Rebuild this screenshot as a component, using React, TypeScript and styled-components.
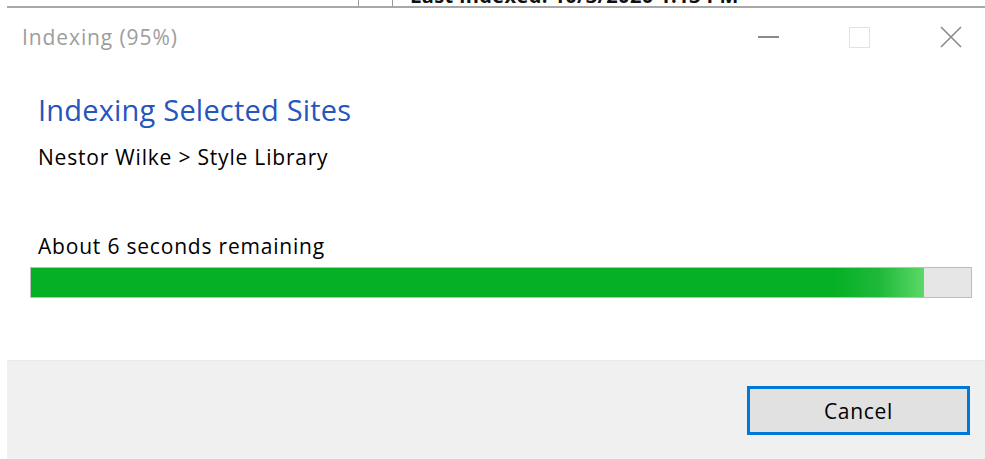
import styled, { createGlobalStyle } from "styled-components";

const GlobalStyle = createGlobalStyle`
  html, body {
    margin: 0;
    padding: 0;
    background: #ffffff;
    font-family: "Segoe UI", "Open Sans", "Noto Sans", sans-serif;
    overflow: hidden;
  }
`;

// sliver of the window lying behind the dialog
const Backdrop = styled.div`
  height: 6px;
  overflow: hidden;
  display: flex;
  align-items: flex-end;
  padding-left: 358px;
  color: #111;
`;

const Tick = styled.span<{ gap?: number }>`
  width: 1px;
  height: 6px;
  margin-left: ${(p) => p.gap ?? 0}px;
  background: #9a9a9a;
`;

const BehindText = styled.span`
  margin-left: 17px;
  font-size: 20px;
  line-height: 1;
  font-weight: 700;
  letter-spacing: 0.4px;
  white-space: nowrap;
`;

const Dialog = styled.div`
  margin-left: 7px;
  height: 453px;
  box-sizing: border-box;
  border-top: 2px solid #a8a8a8;
  background: #ffffff;
  display: flex;
  flex-direction: column;
`;

const TitleBar = styled.div`
  height: 61px;
  box-sizing: border-box;
  display: flex;
  align-items: center;
  padding: 0 0 3px 15px;
`;

const Title = styled.div`
  flex: 1;
  color: #9d9d9d;
  font-size: 21px;
  letter-spacing: 0.9px;
`;

const Controls = styled.div`
  display: flex;
  align-items: center;
  height: 100%;
  margin-right: -11px;
`;

const ControlButton = styled.div`
  width: 91px;
  height: 100%;
  display: flex;
  align-items: center;
  justify-content: center;
`;

const Content = styled.div`
  padding: 23px 13px 0 23px;
  flex: 1;
`;

const Heading = styled.div`
  margin-left: 8px;
  color: #2655bd;
  font-size: 29px;
  line-height: 36px;
  letter-spacing: 0.2px;
`;

const Line = styled.div<{ top: number }>`
  margin: ${(p) => p.top}px 0 0 8px;
  color: #000;
  font-size: 21px;
  line-height: 26px;
  letter-spacing: 0.8px;
`;

const Track = styled.div`
  margin-top: 8px;
  height: 29px;
  border: 1px solid #bcbcbc;
  background: #e6e6e6;
  display: flex;
`;

const Fill = styled.div`
  height: 100%;
  background: linear-gradient(
    to right,
    #06b025 0%,
    #06b025 90%,
    #1fb93a 95%,
    #5cd868 100%
  );
`;

const Footer = styled.div`
  height: 99px;
  background: #f0f0f0;
  border-top: 1px solid #e9e9e9;
  box-sizing: border-box;
  display: flex;
  justify-content: flex-end;
  padding: 25px 15px 0 0;
`;

const Button = styled.button`
  width: 223px;
  height: 49px;
  box-sizing: border-box;
  border: 3px solid #0078d7;
  background: #e1e1e1;
  font-family: inherit;
  font-size: 21px;
  letter-spacing: 0.7px;
  color: #000;
  padding: 0;
`;

const progress = 95;

export default function App() {
  return (
    <>
      <GlobalStyle />
      <Backdrop>
        <Tick />
        <Tick gap={33} />
        <BehindText>Last indexed: 10/3/2020 1:13 PM</BehindText>
      </Backdrop>
      <Dialog>
        <TitleBar>
          <Title>Indexing ({progress}%)</Title>
          <Controls>
            <ControlButton>
              <svg width="21" height="2" viewBox="0 0 21 2">
                <rect width="21" height="2" fill="#8a8a8a" />
              </svg>
            </ControlButton>
            <ControlButton>
              <svg width="21" height="21" viewBox="0 0 21 21">
                <rect x="0.5" y="0.5" width="20" height="20" fill="none" stroke="#e2e2e2" />
              </svg>
            </ControlButton>
            <ControlButton>
              <svg width="22" height="22" viewBox="0 0 22 22">
                <path d="M1 1 L21 21 M21 1 L1 21" stroke="#8a8a8a" strokeWidth="1.6" />
              </svg>
            </ControlButton>
          </Controls>
        </TitleBar>
        <Content>
          <Heading>Indexing Selected Sites</Heading>
          <Line top={16}>Nestor Wilke &gt; Style Library</Line>
          <Line top={63}>About 6 seconds remaining</Line>
          <Track>
            <Fill style={{ width: `${progress}%` }} />
          </Track>
        </Content>
        <Footer>
          <Button>Cancel</Button>
        </Footer>
      </Dialog>
    </>
  );
}
